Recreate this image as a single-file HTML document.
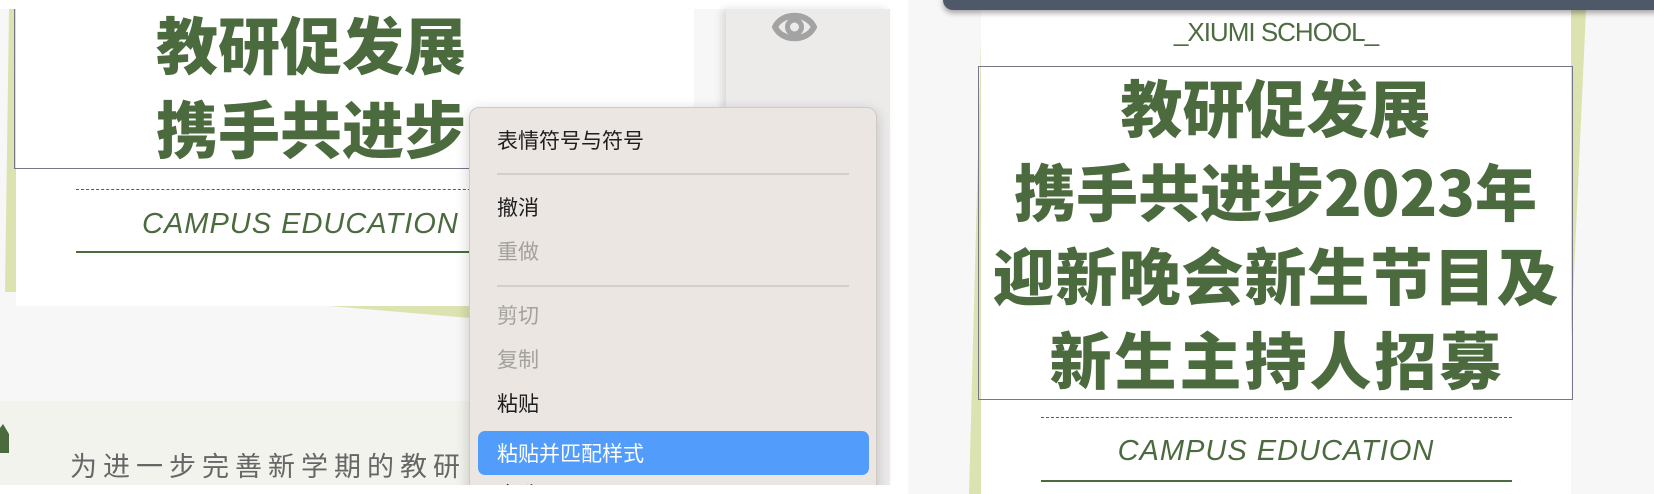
<!DOCTYPE html>
<html><head><meta charset="utf-8"><style>
*{margin:0;padding:0;box-sizing:border-box}
body{width:1654px;height:494px;overflow:hidden;background:#fff;position:relative;font-family:"Liberation Sans","Noto Sans CJK SC",sans-serif}
.a{position:absolute}
.g{color:#4b6a3e}
.t{font-family:"Noto Sans CJK SC",sans-serif;font-weight:900;font-size:62px;line-height:84px;white-space:nowrap;text-align:center}
.it{font-style:italic;font-size:29px;letter-spacing:1px;white-space:nowrap}
.mi{position:absolute;left:497px;font-size:21px;line-height:24px;color:#1e1e1e;font-family:"Noto Sans CJK SC",sans-serif}
.dis{color:#a3a09d}
</style></head><body>
<div class="a" style="left:0;top:0;width:908px;height:485px;overflow:hidden">
<div class="a" style="left:0;top:9px;width:890px;height:476px;background:#f7f7f7"></div>
<div class="a" style="left:0;top:401px;width:890px;height:84px;background:#f2f3ec"></div>
<svg class="a" style="left:0;top:0" width="700" height="330"><polygon points="5,292 9,9 16,9 16,292" fill="#dce3b0"/><polygon points="260,300 470,306 470,318" fill="#dce3b0"/></svg>
<div class="a" style="left:16px;top:9px;width:594px;height:297px;background:#fff"></div>
<div class="a" style="left:14px;top:9px;width:594px;height:160px;border:1.5px solid #77778a;border-top:none"></div>
<div class="a" style="left:607px;top:9px;width:87px;height:300px;background:#fff"></div>
<div class="a" style="left:726px;top:9px;width:164px;height:476px;background:#ecebea;box-shadow:-4px 0 8px rgba(0,0,0,.12)"></div>
<svg class="a" style="left:772px;top:9px" width="45" height="36" viewBox="0 0 45 36"><path d="M3 18 C10 3 35 3 42 18 C35 33 10 33 3 18 Z" fill="none" stroke="#a3a3a3" stroke-width="6"/><circle cx="22.5" cy="18" r="7" fill="none" stroke="#a3a3a3" stroke-width="5"/></svg>
<div class="a t g" style="left:14px;width:594px;top:0px">教研促发展<br>携手共进步</div>
<div class="a" style="left:76px;top:189px;width:420px;border-top:1.5px dashed #4b6a3e"></div>
<div class="a it g" style="left:142px;top:206px;line-height:36px">CAMPUS EDUCATION</div>
<div class="a" style="left:76px;top:251px;width:420px;height:2px;background:#4b6a3e"></div>
<svg class="a" style="left:0;top:424px" width="12" height="30"><polygon points="0,4 3,0 9,10 9,29 0,29" fill="#4b6a3e"/></svg>
<div class="a" style="left:70px;top:445px;font-size:27px;letter-spacing:6px;color:#666;white-space:nowrap;font-family:'Noto Sans CJK SC',sans-serif;line-height:40px">为进一步完善新学期的教研</div>
<div class="a" style="left:469px;top:107px;width:408px;height:400px;background:#ebe6e2;border:1px solid #cfcac6;border-radius:10px;box-shadow:0 4px 14px rgba(0,0,0,.2)"></div>
<div class="mi" style="top:128px">表情符号与符号</div>
<div class="a" style="left:497px;top:173px;width:352px;height:2px;background:#d4cfcb"></div>
<div class="mi" style="top:195px">撤消</div>
<div class="mi dis" style="top:239px">重做</div>
<div class="a" style="left:497px;top:285px;width:352px;height:2px;background:#d4cfcb"></div>
<div class="mi dis" style="top:303px">剪切</div>
<div class="mi dis" style="top:347px">复制</div>
<div class="mi" style="top:391px">粘贴</div>
<div class="a" style="left:478px;top:431px;width:391px;height:44px;background:#529dfc;border-radius:7px"></div>
<div class="mi" style="top:441px;color:#fff">粘贴并匹配样式</div>
<div class="mi" style="top:482px">全选</div>
</div>
<!-- right -->
<div class="a" style="left:908px;top:0;width:746px;height:494px;background:#f7f7f7"></div>
<svg class="a" style="left:0;top:0" width="1654" height="494"><polygon points="969,494 981,40 981,494" fill="#dce3b0"/><polygon points="1571,10 1586,10 1571,340" fill="#dce3b0"/></svg>
<div class="a" style="left:981px;top:0;width:590px;height:494px;background:#fff"></div>
<div class="a" style="left:943px;top:-10px;width:720px;height:20px;background:#4e5869;border-radius:10px;box-shadow:0 3px 6px rgba(0,0,0,.35)"></div>
<div class="a g" style="left:981px;width:590px;top:17px;text-align:center;font-size:26px;line-height:30px;letter-spacing:-1px;color:#4d6b40">_XIUMI SCHOOL_</div>
<div class="a" style="left:978px;top:66px;width:595px;height:334px;border:1.5px solid #77778a"></div>
<div class="a t g" style="left:978px;width:595px;top:63px">
<div style="letter-spacing:0px">教研促发展</div>
<div style="letter-spacing:0px">携手共进步2023年</div>
<div style="letter-spacing:1px;margin-right:-1px">迎新晚会新生节目及</div>
<div style="letter-spacing:3px;margin-right:-3px">新生主持人招募</div>
</div>
<div class="a" style="left:1041px;top:417px;width:471px;border-top:1.5px dashed #4b6a3e"></div>
<div class="a it g" style="left:981px;width:590px;text-align:center;top:433px;line-height:36px">CAMPUS EDUCATION</div>
<div class="a" style="left:1041px;top:480px;width:471px;height:2px;background:#4b6a3e"></div>
</body></html>
